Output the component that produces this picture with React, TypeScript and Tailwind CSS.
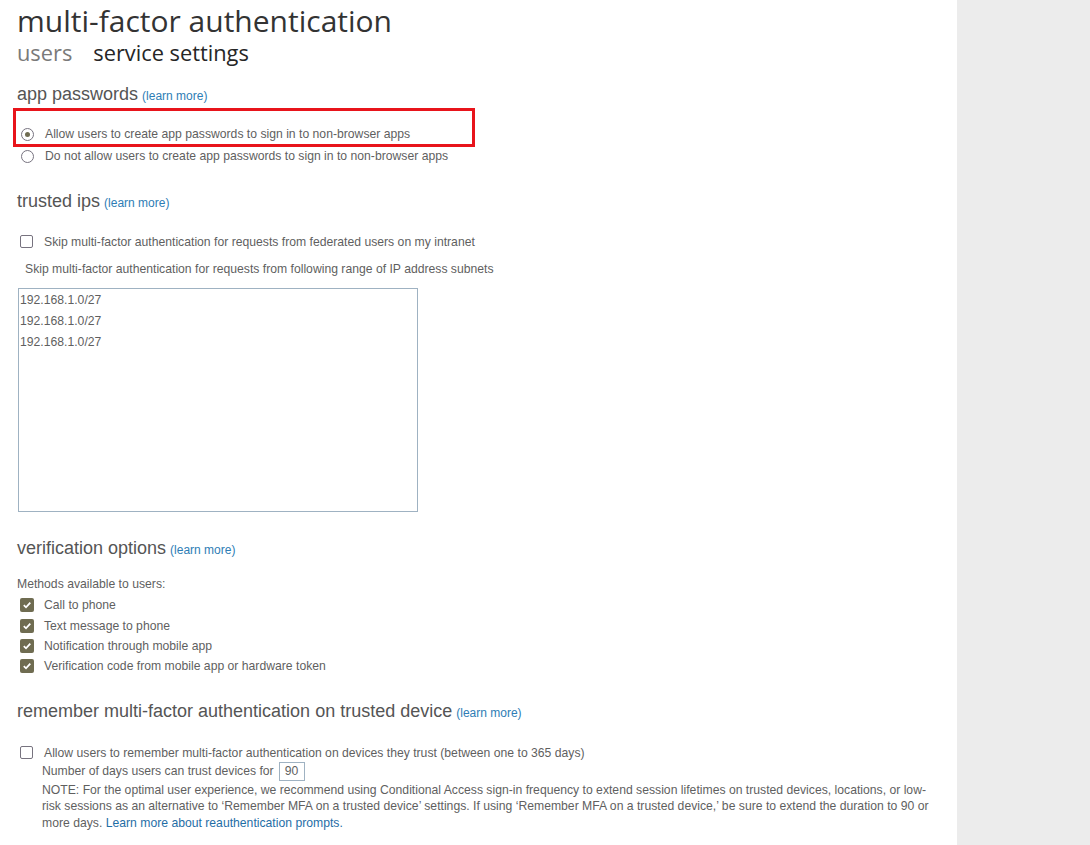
import React from "react";

const Check = () => (
  <span className="inline-flex h-[14px] w-[14px] items-center justify-center rounded-[2px] bg-[#6f6c51]">
    <svg width="10" height="10" viewBox="0 0 10 10">
      <path d="M1.8 5.2 L4 7.3 L8.3 2.6" fill="none" stroke="white" strokeWidth="1.8" />
    </svg>
  </span>
);

const Empty = () => (
  <span className="inline-block h-[13px] w-[13px] shrink-0 rounded-[2px] border-[1.5px] border-[#77737f] bg-white" />
);

const Learn = () => <span className="ml-1 text-[12px] text-[#2e7db5]">(learn more)</span>;

export default function App() {
  return (
    <div className="flex min-h-[845px] w-[1090px] bg-white" style={{ fontFamily: '"Liberation Sans", Arial, sans-serif' }}>
      <div className="w-[957px] pl-[17px] text-[12.2px] text-[#5f5f5f]">
        <h1 className="mt-[3px] text-[30px] leading-[36px] text-[#333]" style={{ fontFamily: '"Open Sans", sans-serif' }}>
          multi-factor authentication
        </h1>
        <div className="mt-[1px] flex gap-[21px] text-[21.8px] leading-[26px]" style={{ fontFamily: '"Open Sans", sans-serif' }}>
          <span className="text-[#7a7a7a]">users</span>
          <span className="text-[#262626]">service settings</span>
        </div>

        <div className="mt-[17px] text-[18px] leading-[22px] text-[#555]">
          app passwords<Learn />
        </div>
        <div className="mt-[1px] -ml-[4px] w-[462px] border-[3px] border-[#e8141b] pt-[14px] pb-[1px] pl-[5px]">
          <div className="flex items-center gap-[11px]">
            <span className="flex h-[13px] w-[13px] items-center justify-center rounded-full border-[1.5px] border-[#77737f]">
              <span className="h-[5px] w-[5px] rounded-full bg-[#6f6c51]" />
            </span>
            Allow users to create app passwords to sign in to non-browser apps
          </div>
        </div>
        <div className="flex items-center gap-[11px] pl-[4px]">
          <span className="h-[13px] w-[13px] rounded-full border-[1.5px] border-[#77737f]" />
          Do not allow users to create app passwords to sign in to non-browser apps
        </div>

        <div className="mt-[24px] text-[18px] leading-[22px] text-[#555]">
          trusted ips<Learn />
        </div>
        <div className="mt-[19px] flex items-center gap-[11px] pl-[3px]">
          <Empty />
          Skip multi-factor authentication for requests from federated users on my intranet
        </div>
        <div className="mt-[9px] pl-[8px]">Skip multi-factor authentication for requests from following range of IP address subnets</div>
        <div className="mt-[10px] ml-[1px] h-[224px] w-[400px] border border-[#9fb2c2] pl-[1px] pt-[1px] leading-[21px]">
          <div>192.168.1.0/27</div>
          <div>192.168.1.0/27</div>
          <div>192.168.1.0/27</div>
        </div>

        <div className="mt-[25px] text-[18px] leading-[22px] text-[#555]">
          verification options<Learn />
        </div>
        <div className="mt-[16px] leading-[14px]">Methods available to users:</div>
        <div className="mt-[7px] flex flex-col gap-[5.8px] pl-[3px]">
          {[
            "Call to phone",
            "Text message to phone",
            "Notification through mobile app",
            "Verification code from mobile app or hardware token",
          ].map((t) => (
            <div key={t} className="flex h-[14.5px] items-center gap-[10px]">
              <Check />
              {t}
            </div>
          ))}
        </div>

        <div className="mt-[26px] text-[18px] leading-[22px] text-[#555]">
          remember multi-factor authentication on trusted device<Learn />
        </div>
        <div className="mt-[20px] flex items-center gap-[11px] pl-[3px]">
          <Empty />
          Allow users to remember multi-factor authentication on devices they trust (between one to 365 days)
        </div>
        <div className="flex items-center pl-[25px]">
          Number of days users can trust devices for
          <span className="ml-[5px] inline-flex h-[19px] w-[26px] items-center border border-[#9fb2c2] pl-[5px]">90</span>
        </div>
        <div className="mt-[1px] w-[921px] pl-[25px] leading-[16.5px]">
          NOTE: For the optimal user experience, we recommend using Conditional Access sign-in frequency to extend session lifetimes on trusted devices, locations, or low-risk sessions as an alternative to ‘Remember MFA on a trusted device’ settings. If using ‘Remember MFA on a trusted device,’ be sure to extend the duration to 90 or more days. <span className="text-[#1f6ea6]">Learn more about reauthentication prompts.</span>
        </div>
      </div>
      <div className="flex-1 bg-[#ececec]" />
    </div>
  );
}
